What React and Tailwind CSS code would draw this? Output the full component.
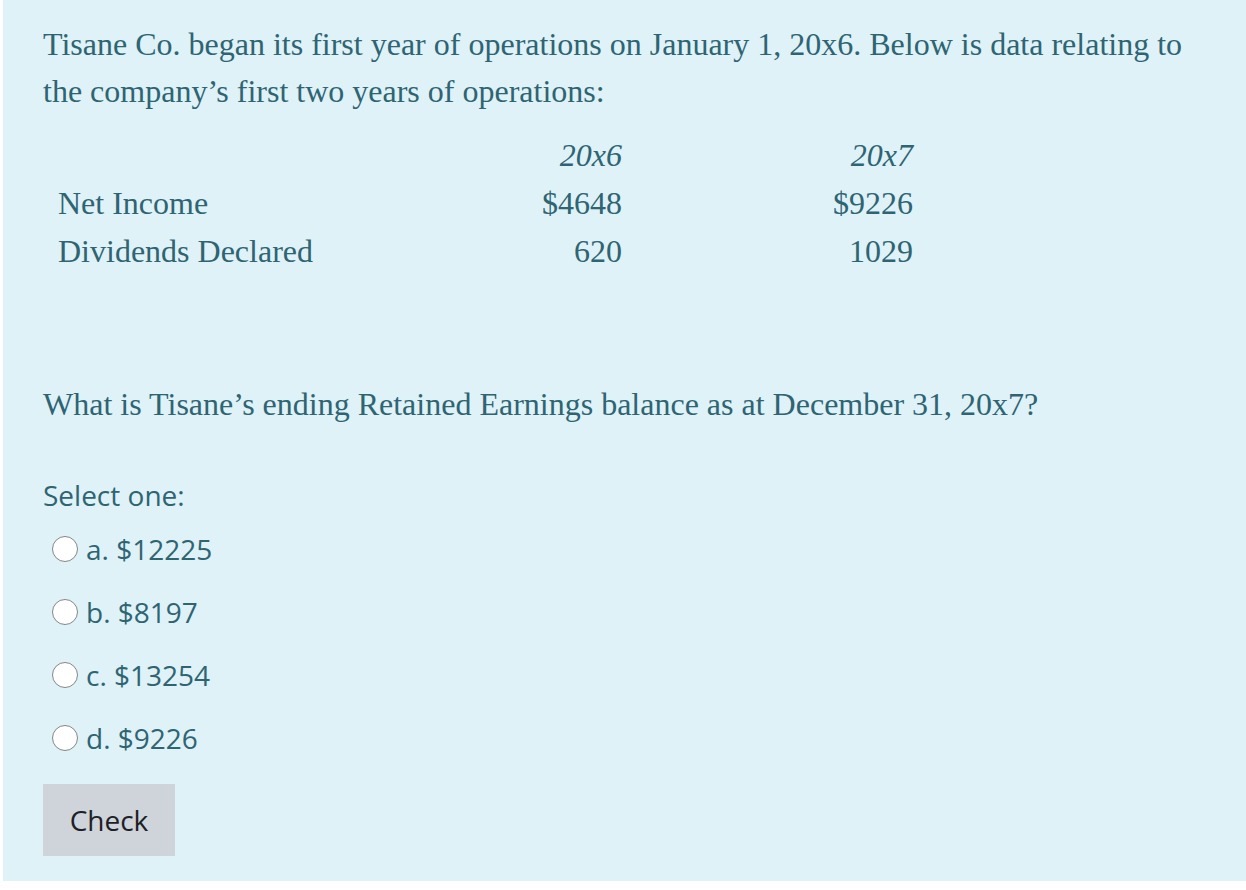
import React from "react";

const serif = { fontFamily: '"Liberation Serif", "Times New Roman", serif' };

function Radio({ label }) {
  return (
    <label className="flex items-center h-[63px]">
      <span className="ml-[9px] w-[26px] h-[26px] rounded-full border border-[#858585] bg-white shrink-0" />
      <span className="ml-[8px]">{label}</span>
    </label>
  );
}

export default function App() {
  const rows = [
    ["Net Income", "$4648", "$9226"],
    ["Dividends Declared", "620", "1029"],
  ];
  return (
    <div className="bg-white w-[1246px] h-[890px] pl-[3px]">
      <div className="bg-[#def2f8] text-[#2f6473] h-[881px] pl-[40px] pr-[40px] pt-[21px]">
        <div style={serif} className="text-[32px]">
          <p className="leading-[47px]">
            Tisane Co. began its first year of operations on January 1, 20x6. Below is data relating to the company’s first two years of operations:
          </p>
          <div className="ml-[15px] mt-[16px] grid grid-cols-[310px_254px_291px] leading-[48px]">
            <div />
            <div className="text-right italic">20x6</div>
            <div className="text-right italic">20x7</div>
            {rows.map((r) => (
              <React.Fragment key={r[0]}>
                <div>{r[0]}</div>
                <div className="text-right">{r[1]}</div>
                <div className="text-right">{r[2]}</div>
              </React.Fragment>
            ))}
          </div>
          <p className="mt-[105px] leading-[48px]">
            What is Tisane’s ending Retained Earnings balance as at December 31, 20x7?
          </p>
        </div>
        <div
          className="text-[28px] mt-[43px]"
          style={{ fontFamily: '"Open Sans", "Noto Sans", sans-serif' }}
        >
          <div className="leading-[48px]">Select one:</div>
          <div className="mt-[-2px]">
            <Radio label="a. $12225" />
            <Radio label="b. $8197" />
            <Radio label="c. $13254" />
            <Radio label="d. $9226" />
          </div>
          <button className="mt-[15px] w-[132px] h-[72px] bg-[#ced4da] text-[#1d2125] text-[28px] leading-none">
            Check
          </button>
        </div>
      </div>
    </div>
  );
}
